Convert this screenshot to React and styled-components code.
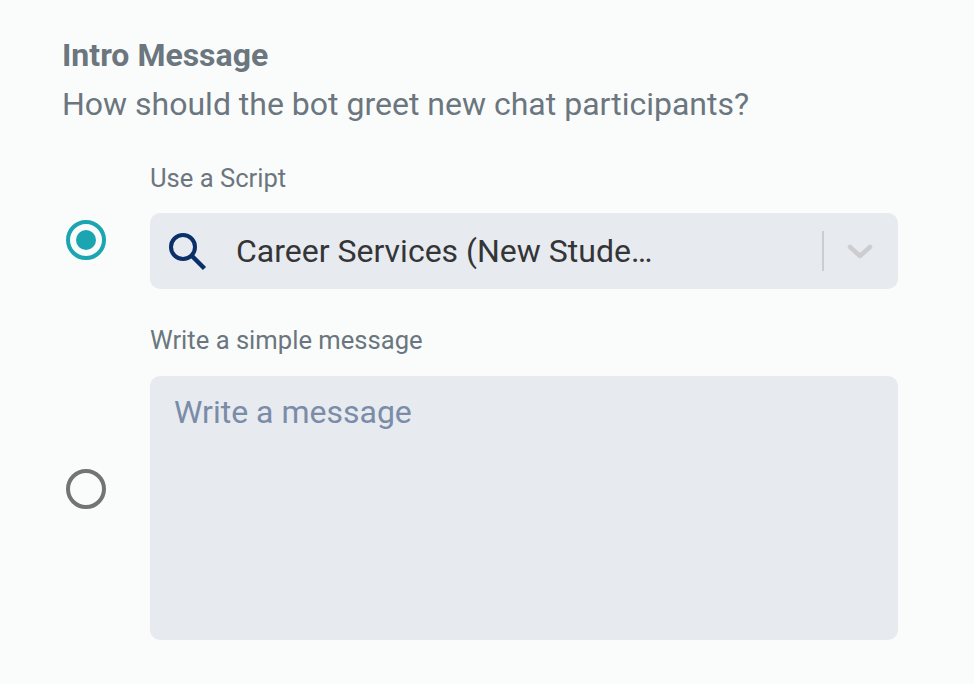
import { createGlobalStyle, styled } from "styled-components";

const GlobalStyle = createGlobalStyle`
	html,
	body {
		margin: 0;
		height: 100%;
		background-color: #fafcfc;
		font-family: Roboto, "Liberation Sans", sans-serif;
	}
`;

const Page = styled.div`
	display: flex;
	flex-direction: column;
	width: 974px;
	height: 684px;
	box-sizing: border-box;
	padding: 37px 76px 0 62px;
	overflow: hidden;
`;

const Title = styled.h1`
	margin: 0;
	font-size: 32px;
	line-height: 36px;
	font-weight: 700;
	color: #6b767e;
`;

const Subtitle = styled.p`
	margin: 13px 0 0;
	font-size: 32px;
	line-height: 36px;
	font-weight: 400;
	color: #6b767e;
`;

const OptionRow = styled.div`
	display: grid;
	grid-template-columns: 88px 1fr;
	margin-top: ${(props) => props.$gap}px;
`;

const Radio = styled.span`
	display: flex;
	align-items: center;
	justify-content: center;
	width: 40px;
	height: 40px;
	box-sizing: border-box;
	margin: ${(props) => props.$top}px 0 0 4px;
	border-radius: 50%;
	border: 4px solid ${(props) => (props.$checked ? "#1ba5b1" : "#747474")};
`;

const RadioDot = styled.span`
	width: 20px;
	height: 20px;
	border-radius: 50%;
	background-color: #1ba5b1;
`;

const Field = styled.div`
	display: flex;
	flex-direction: column;
`;

const Label = styled.label`
	font-size: 25.6px;
	line-height: 30px;
	color: #6b767e;
	margin-bottom: ${(props) => props.$gap}px;
`;

const Select = styled.div`
	display: flex;
	align-items: center;
	height: 76px;
	box-sizing: border-box;
	padding: 0 24px 0 18px;
	border-radius: 10px;
	background-color: #e7eaef;
`;

const SearchIcon = styled.svg`
	flex-shrink: 0;
	width: 40px;
	height: 40px;
`;

const SelectValue = styled.span`
	flex-grow: 1;
	margin-left: 28px;
	font-size: 32px;
	color: #333537;
`;

const Divider = styled.span`
	width: 2px;
	height: 40px;
	background-color: #cdcdcf;
`;

const ChevronIcon = styled.svg`
	flex-shrink: 0;
	width: 28px;
	height: 16px;
	margin-left: 22px;
`;

const MessageBox = styled.div`
	height: 264px;
	box-sizing: border-box;
	padding: 18px 24px;
	border-radius: 10px;
	background-color: #e7eaef;
	font-size: 32px;
	line-height: 36px;
	color: #7a8ca8;
`;

const App = () => {
	return (
		<>
			<GlobalStyle />
			<Page>
				<Title>Intro Message</Title>
				<Subtitle>How should the bot greet new chat participants?</Subtitle>
				<OptionRow $gap={41}>
					<Radio $checked $top={57}>
						<RadioDot />
					</Radio>
					<Field>
						<Label $gap={20}>Use a Script</Label>
						<Select>
							<SearchIcon viewBox="0 0 40 40" fill="none">
								<circle cx="15" cy="16" r="12" stroke="#0b3069" strokeWidth="4" />
								<path d="M24 25L36.5 37.5" stroke="#0b3069" strokeWidth="4.5" />
							</SearchIcon>
							<SelectValue>Career Services (New Stude…</SelectValue>
							<Divider />
							<ChevronIcon viewBox="0 0 28 16" fill="none">
								<path d="M4 4L14 13L24 4" stroke="#cdcdcf" strokeWidth="4.5" strokeLinecap="round" strokeLinejoin="round" />
							</ChevronIcon>
						</Select>
					</Field>
				</OptionRow>
				<OptionRow $gap={36}>
					<Radio $top={144} />
					<Field>
						<Label $gap={21}>Write a simple message</Label>
						<MessageBox>Write a message</MessageBox>
					</Field>
				</OptionRow>
			</Page>
		</>
	);
};

export default App;
